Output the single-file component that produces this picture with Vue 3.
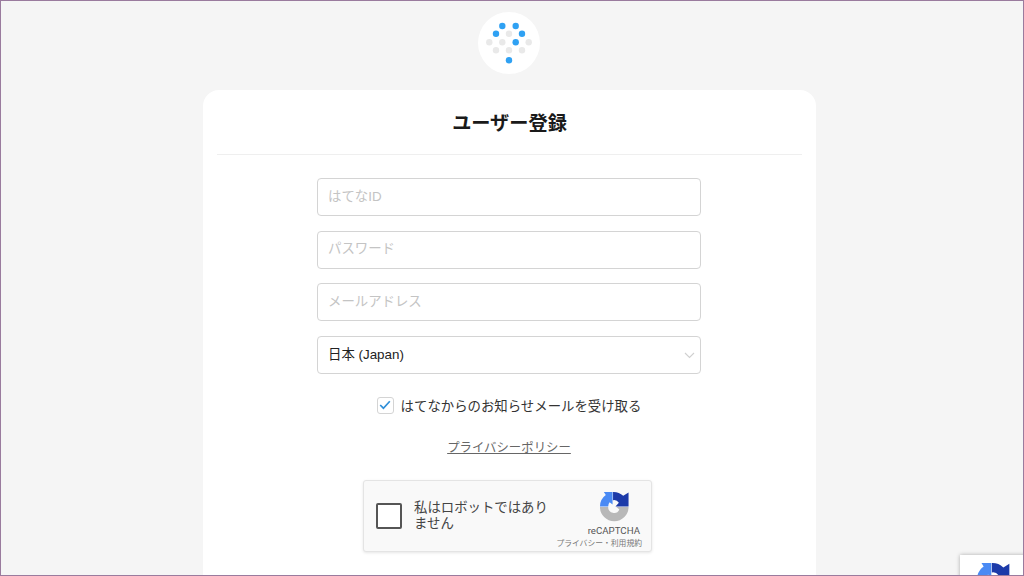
<template>
  <div class="page">
    <div class="logo">
      <svg width="62" height="62" viewBox="0 0 62 62">
        <circle
          v-for="(d, i) in dots"
          :key="i"
          :cx="d[0]"
          :cy="d[1]"
          r="3.2"
          :fill="d[2] ? '#2fa1f3' : '#e9e9e9'"
        />
      </svg>
    </div>

    <main class="card">
      <h1 class="title">ユーザー登録</h1>
      <form class="form" @submit.prevent>
        <input class="field" type="text" placeholder="はてなID" />
        <input class="field" type="password" placeholder="パスワード" />
        <input class="field" type="email" placeholder="メールアドレス" />
        <div class="select-wrap">
          <select class="field select" v-model="country">
            <option>日本 (Japan)</option>
          </select>
          <svg class="chevron" width="11" height="7" viewBox="0 0 11 7">
            <path d="M1 1l4.5 4.5L10 1" fill="none" stroke="#d0d0d0" stroke-width="1.1" />
          </svg>
        </div>

        <label class="news">
          <span class="check">
            <svg width="12" height="10" viewBox="0 0 12 10">
              <path d="M1.2 5l3.2 3.2L10.8 1.2" fill="none" stroke="#2f8fd8" stroke-width="1.7" />
            </svg>
          </span>
          はてなからのお知らせメールを受け取る
        </label>

        <a class="policy" href="#">プライバシーポリシー</a>

        <div class="captcha">
          <span class="captcha-box"></span>
          <span class="captcha-label">私はロボットではありません</span>
          <div class="captcha-brand">
            <svg class="captcha-logo" width="31" height="31" viewBox="6 4 32 32">
              <path :d="logoBlue" fill="#4a8af4" />
              <path :d="logoDark" fill="#1c3aa9" />
              <path :d="logoGrey" fill="#b8b8b8" />
            </svg>
            <span class="brand-name">reCAPTCHA</span>
            <span class="brand-links">プライバシー・利用規約</span>
          </div>
        </div>
      </form>
    </main>

    <div class="badge">
      <svg width="35" height="35" viewBox="6 4 32 32">
        <path :d="logoBlue" fill="#4a8af4" />
        <path :d="logoDark" fill="#1c3aa9" />
        <path :d="logoGrey" fill="#b8b8b8" />
      </svg>
    </div>
  </div>
</template>

<script setup>
import { ref } from 'vue'

const country = ref('日本 (Japan)')

// x, y, blue or not
const dots = [
  [24.3, 14, 1], [37.7, 14, 1],
  [18, 21.7, 1], [31, 21.7, 0], [44, 21.7, 1],
  [11.3, 30.3, 0], [24.3, 30.3, 0], [37.7, 30.3, 1], [50.7, 30.3, 0],
  [18, 38.3, 0], [31, 38.3, 0], [44, 38.3, 0],
  [31, 48.3, 1]
]

// recaptcha mark, three pieces of a thick ring
const logoBlue = 'M7 20H15.5A6 6 0 0 1 17 15.5L20 18V5H11L13 8A14.5 14.5 0 0 0 7 20Z'
const logoDark = 'M20.5 5A14.5 14.5 0 0 1 31 9L36.5 5.5V20H23L26.5 16A6 6 0 0 0 20.5 13.5Z'
const logoGrey = 'M7 20.5H15.5A6 6 0 0 0 27 23L24 20.5H36.5A14.5 14.5 0 0 1 7 20.5Z'
</script>

<style>
html,
body {
  margin: 0;
  overflow: hidden;
}
</style>

<style scoped>
.page {
  position: relative;
  box-sizing: border-box;
  width: 1024px;
  height: 576px;
  overflow: hidden;
  padding: 11px 5px 0 0;
  display: flex;
  flex-direction: column;
  align-items: center;
  background: #f5f5f5;
  border: 1px solid #9a7b9e;
  font-family: "Liberation Sans", "Noto Sans CJK JP", sans-serif;
  color: #222;
}

.logo {
  width: 62px;
  height: 62px;
  flex: none;
  margin-right: 1px;
  border-radius: 50%;
  background: #fff;
}

.logo svg {
  display: block;
}

.card {
  width: 613px;
  flex: none;
  margin-top: 16px;
  box-sizing: border-box;
  padding: 0 14px 40px;
  background: #fff;
  border-radius: 16px;
}

.title {
  margin: 0;
  height: 64px;
  line-height: 68px;
  text-align: center;
  font-size: 19.2px;
  font-weight: 700;
  color: #1a1a1a;
  border-bottom: 1px solid #efefef;
}

.form {
  display: flex;
  flex-direction: column;
  align-items: center;
  padding: 23px 1px 0 0;
}

.field {
  box-sizing: border-box;
  display: block;
  width: 384px;
  height: 38px;
  margin: 0 0 14.7px;
  padding: 0 10px 2px;
  background: #fff;
  border: 1px solid #d4d4d4;
  border-radius: 4px;
  outline: none;
  font-family: inherit;
  font-size: 13.4px;
  color: #222;
}

.field::placeholder {
  color: #c4c4c4;
}

.select-wrap {
  position: relative;
}

.select {
  appearance: none;
  margin-bottom: 0;
}

.chevron {
  position: absolute;
  top: 16px;
  right: 6px;
}

.news {
  display: flex;
  align-items: center;
  gap: 7px;
  margin-top: 22px;
  height: 18px;
  font-size: 13.4px;
  color: #333;
}

.check {
  box-sizing: border-box;
  width: 17px;
  height: 17px;
  display: flex;
  align-items: center;
  justify-content: center;
  border: 1px solid #d4d4d4;
  border-radius: 3px;
}

.policy {
  margin-top: 25px;
  font-size: 12.4px;
  line-height: 18px;
  color: #666;
}

.captcha {
  box-sizing: border-box;
  width: 289px;
  height: 72px;
  margin-top: 23px;
  margin-right: 3px;
  display: flex;
  align-items: center;
  background: #f9f9f9;
  border: 1px solid #e4e4e4;
  border-radius: 3px;
  box-shadow: 0 1px 3px rgba(0, 0, 0, 0.1);
}

.captcha-box {
  box-sizing: border-box;
  width: 26px;
  height: 26px;
  flex: none;
  margin-left: 12px;
  background: #fff;
  border: 2px solid #555;
  border-radius: 2px;
}

.captcha-label {
  width: 140px;
  margin-left: 12px;
  font-size: 13.4px;
  line-height: 16px;
  color: #444;
}

.captcha-brand {
  flex: 1;
  align-self: stretch;
  display: flex;
  flex-direction: column;
  align-items: flex-end;
  padding: 10px 9px 0 0;
  white-space: nowrap;
}

.captcha-logo {
  display: block;
  margin-right: 12px;
}

.brand-name {
  margin: 2px 2px 0 0;
  font-family: "Roboto", sans-serif;
  font-size: 9.7px;
  line-height: 13px;
  color: #555;
}

.brand-links {
  margin-top: 1px;
  font-size: 7.8px;
  line-height: 12px;
  color: #777;
}

.badge {
  position: absolute;
  left: 959px;
  top: 554px;
  width: 70px;
  height: 60px;
  background: #fff;
  box-shadow: 0 0 4px rgba(0, 0, 0, 0.3);
}

.badge svg {
  display: block;
  margin: 7px 0 0 16px;
}
</style>
